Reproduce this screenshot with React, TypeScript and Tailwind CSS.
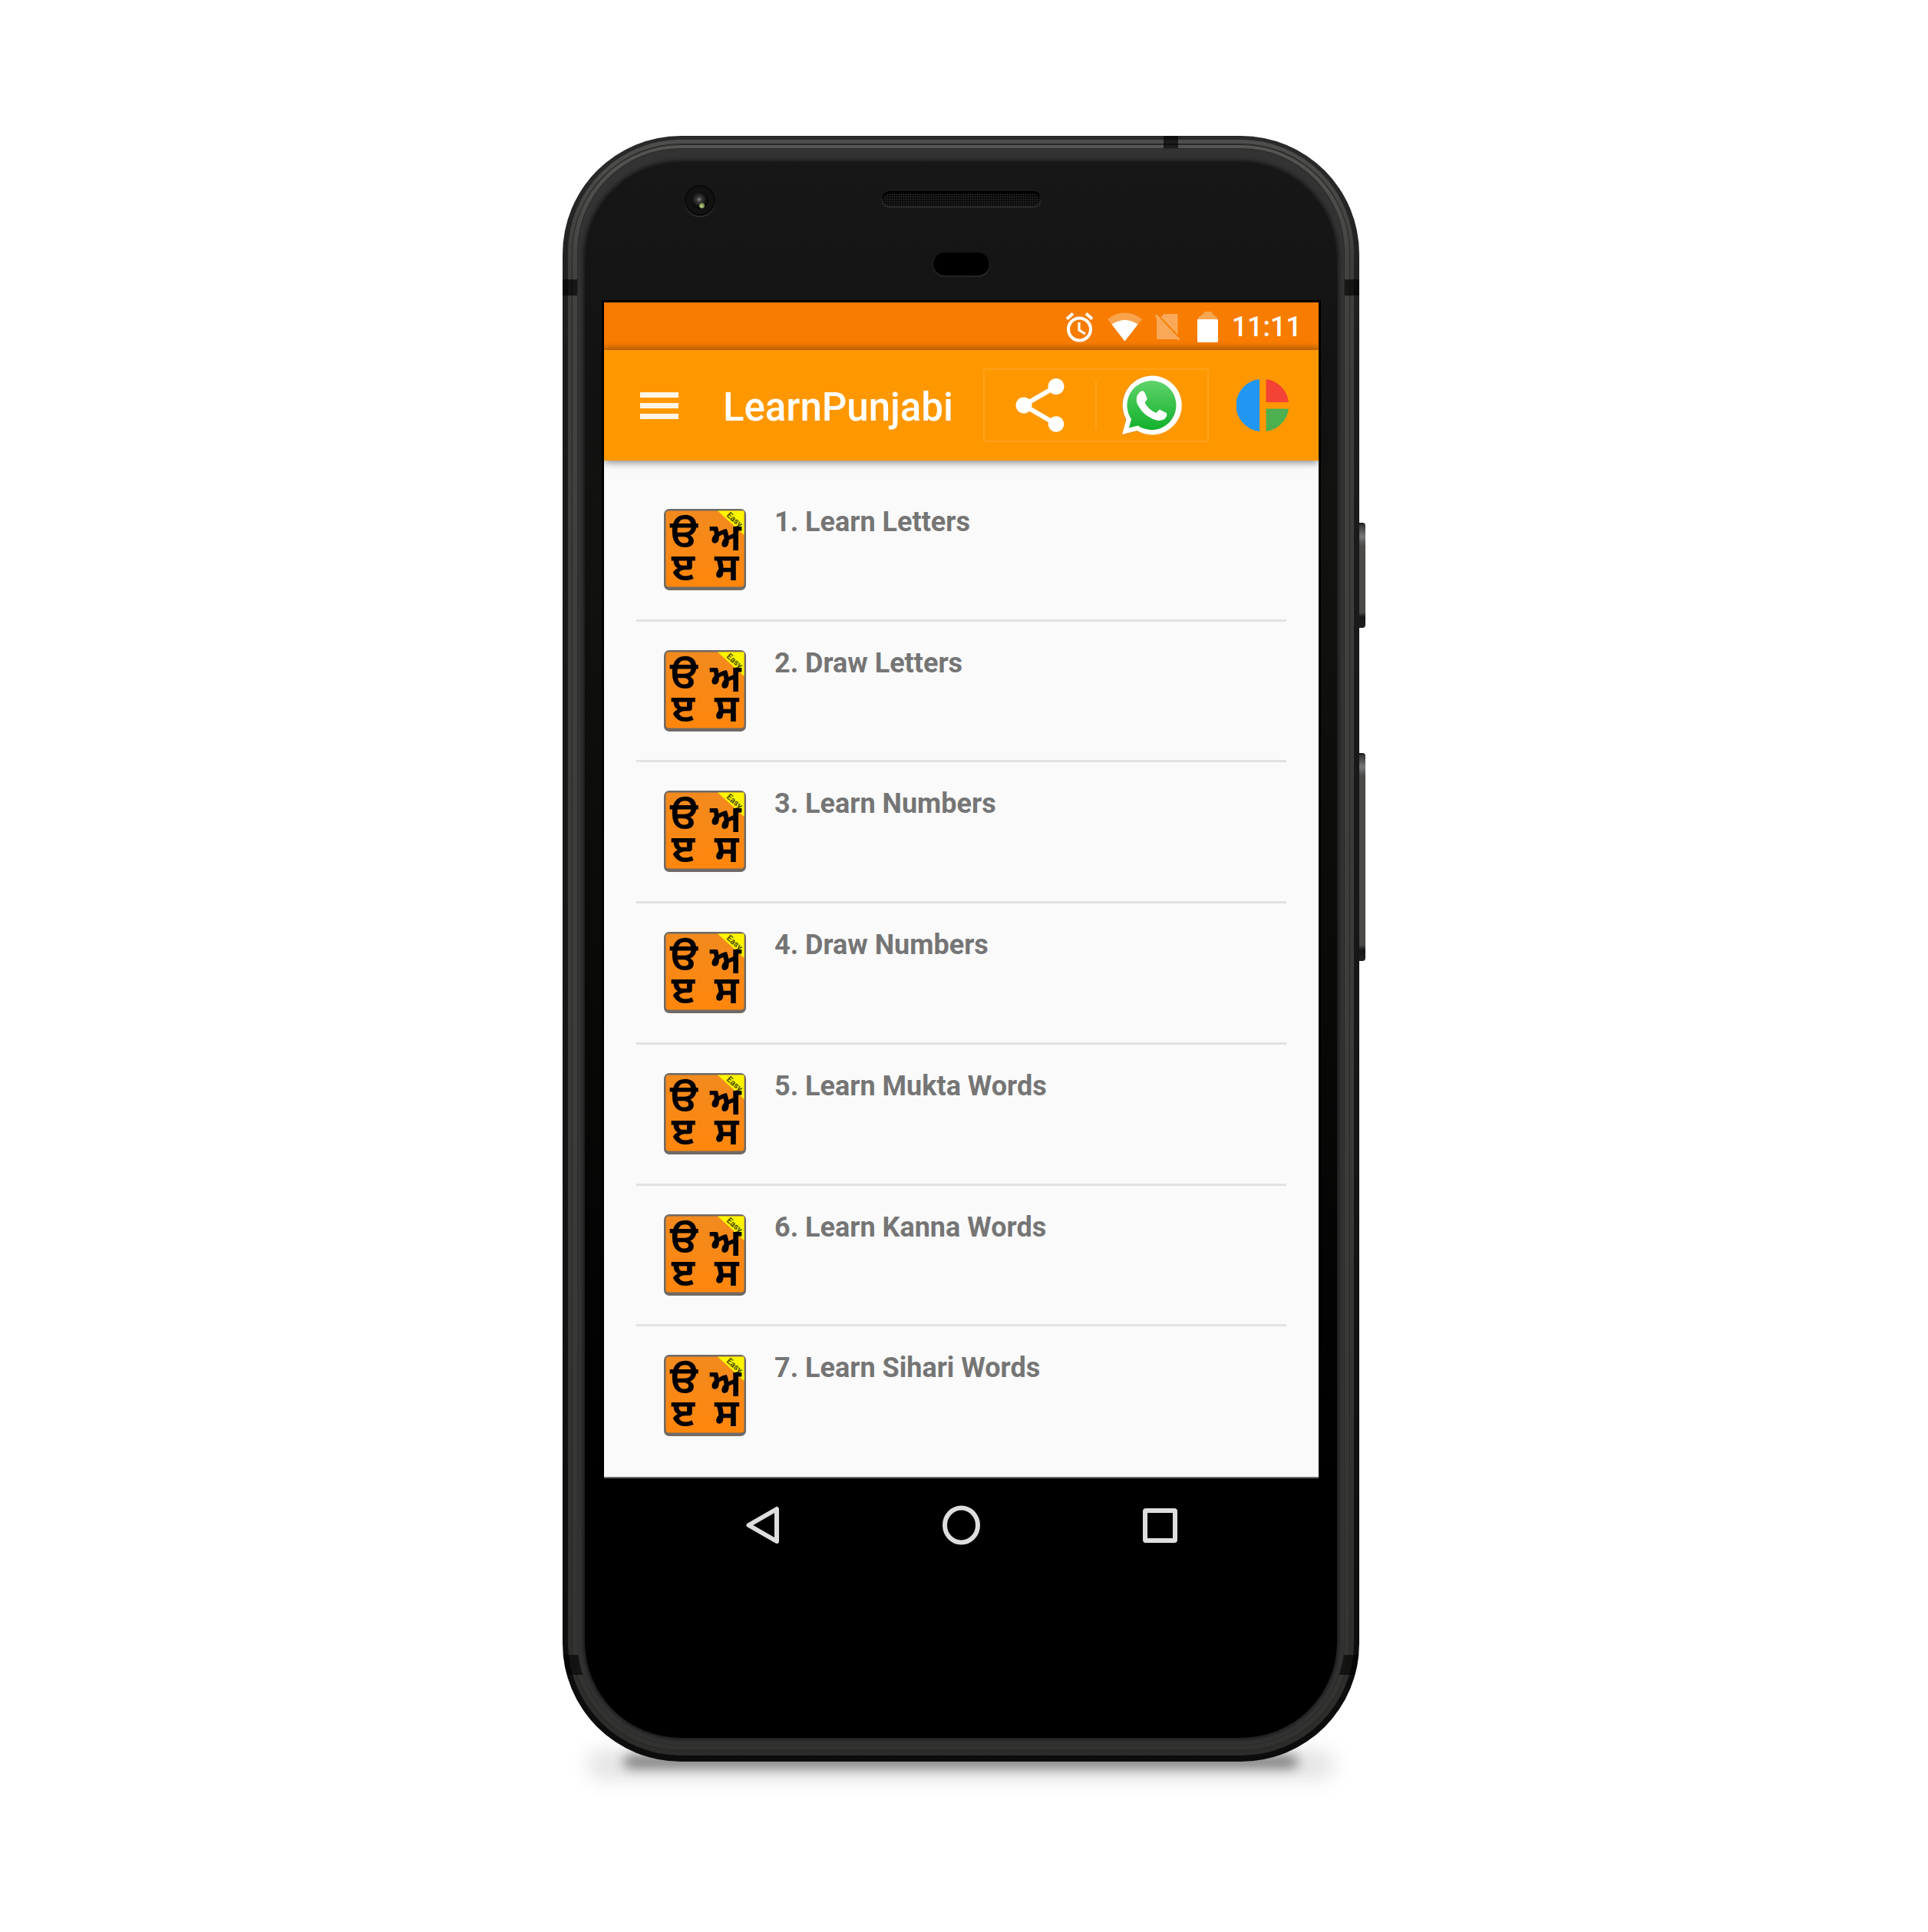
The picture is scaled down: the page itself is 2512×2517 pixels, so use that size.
import React from "react";

const LESSONS = [
  "Learn Letters",
  "Draw Letters",
  "Learn Numbers",
  "Draw Numbers",
  "Learn Mukta Words",
  "Learn Kanna Words",
  "Learn Sihari Words",
];

function AlarmIcon() {
  return (
    <svg viewBox="0 0 37 40" className="h-10 w-[37px]" fill="none" stroke="white" aria-hidden="true">
      <circle cx="18.5" cy="23" r="14.5" strokeWidth="4" />
      <path d="M18 14v10l8 5" strokeWidth="3.2" />
      <path d="M2 9.500l8-7M35 9.500l-8-7" strokeWidth="4" />
    </svg>
  );
}

function WifiIcon() {
  return (
    <svg viewBox="0 0 45 38" className="h-[38px] w-[45px]" aria-hidden="true">
      <path d="M22.500 37.500L0 9C6 4 13.500.500 22.500.500S39 4 45 9z" fill="white" opacity=".3" />
      <path d="M22.500 37.500L5.500 15.500C10 12.500 16 10 22.500 10S35 12.500 39.500 15.500z" fill="white" />
    </svg>
  );
}

function NoSimIcon() {
  return (
    <svg viewBox="0 0 34 37" className="h-[37px] w-[34px]" fill="white" opacity=".34" aria-hidden="true">
      <path d="M8.500 5l4-4h18v27z" />
      <path d="M1 3.500L3 1.500 33.500 34l-2 2-2-2H3V7.500z" />
    </svg>
  );
}

function BatteryIcon() {
  return (
    <svg viewBox="0 0 27 40" className="h-10 w-[27px]" fill="white" aria-hidden="true">
      <path d="M1 10q0-4 4-5l4-4q1-1 3-1h4q2 0 3 1l3 4q4 1 4 5z" opacity=".32" />
      <path d="M0 10h27v28q0 2-2 2H2q-2 0-2-2z" />
    </svg>
  );
}

function ShareIcon() {
  return (
    <svg viewBox="0 0 24 24" className="size-21" fill="white" aria-hidden="true">
      <path d="M18 16.080c-.76 0-1.440.3-1.960.77L8.910 12.700c.05-.23.09-.46.09-.7s-.04-.47-.09-.7l7.050-4.110c.54.5 1.250.81 2.040.81 1.660 0 3-1.340 3-3s-1.340-3-3-3-3 1.340-3 3c0 .24.04.47.09.7L8.040 9.810C7.500 9.310 6.790 9 6 9c-1.660 0-3 1.340-3 3s1.340 3 3 3c.79 0 1.500-.31 2.040-.81l7.120 4.160c-.05.21-.08.43-.08.65 0 1.610 1.310 2.920 2.920 2.920s2.920-1.310 2.920-2.920-1.310-2.920-2.920-2.920z" />
    </svg>
  );
}

function WhatsAppIcon() {
  return (
    <svg viewBox="0 0 80 80" className="size-20" aria-hidden="true">
      <defs>
        <linearGradient id="wa" x1="0" y1="0" x2="0" y2="1">
          <stop offset="0" stopColor="#5fd36a" />
          <stop offset="1" stopColor="#12b02c" />
        </linearGradient>
      </defs>
      <path d="M0 79.500L5.500 59A38.500 38.500 0 1 1 21 74z" fill="#c98a2e" opacity=".5" />
      <path d="M1 78L6.500 58.500A38.500 38.500 0 1 1 20.500 73z" fill="white" />
      <path d="M10 69.500L13 58A32 32 0 1 1 21.500 66.500z" fill="url(#wa)" />
      <path
        transform="translate(19 20)"
        d="M7 1.500C9 .8 10.500 1.500 11.500 3.500L14.500 10.500C15 12 14 13.500 11.500 16.500C15 23 20 27.500 26.500 30C28.500 27.800 30 25.600 31.200 25.800L39 29.500C41 30.600 40.500 33.500 39 36C36.500 39.500 31 40.800 26 39.200C14.500 35.500 7 28.500 2 18.500C-1 11.500 1.500 4.500 7 1.500Z"
        fill="white"
      />
    </svg>
  );
}

function PieIcon() {
  return (
    <svg viewBox="0 0 68 68" className="size-17" aria-hidden="true">
      <path d="M30 0v68A34.200 34.200 0 0 1 30 0z" fill="#2196f3" />
      <path d="M38.500 0A34 34 0 0 1 68 30H38.500z" fill="#f44336" />
      <path d="M38.500 38.500H68A34 34 0 0 1 38.500 68z" fill="#4caf50" />
    </svg>
  );
}

function LessonIcon() {
  return (
    <svg viewBox="0 0 107 106" className="h-[106px] w-[107px] shrink-0 overflow-visible" aria-hidden="true">
      <defs>
        <linearGradient id="tile" x1="0" y1="0" x2="0" y2="1">
          <stop offset="0" stopColor="#f28a1e" />
          <stop offset="1" stopColor="#ff860c" />
        </linearGradient>
      </defs>
      <rect x="0" y="0" width="107" height="106" rx="7" fill="#6f6a66" />
      <rect x="2.500" y="2.500" width="102" height="99" rx="4" fill="url(#tile)" />
      <path d="M70 2.500H104.500V34z" fill="#fdf500" />
      <text transform="translate(81 9) rotate(42)" fontSize="11" fontWeight="700" fontFamily="Roboto, sans-serif" fill="#4a4a00">
        Easy
      </text>
      <g fontFamily='"Noto Sans Gurmukhi", "Noto Sans", FreeSans, sans-serif' fontWeight="700" fontSize="50" fill="#000">
        <text x="8" y="50">ੳ</text>
        <text x="60" y="54">ਅ</text>
        <text x="10" y="93">ੲ</text>
        <text x="66" y="93">ਸ</text>
      </g>
    </svg>
  );
}

function StatusBar() {
  return (
    <div className="flex h-[62px] items-center justify-end bg-[linear-gradient(to_bottom,#f77c00_52px,#d87000)] pt-0.5 pr-[22px]">
      <AlarmIcon />
      <span className="ml-[18px]"><WifiIcon /></span>
      <span className="ml-4"><NoSimIcon /></span>
      <span className="ml-[22px]"><BatteryIcon /></span>
      <span className="ml-[18px] text-[36px] leading-none font-medium text-white">11:11</span>
    </div>
  );
}

function Toolbar() {
  return (
    <header className="relative z-10 flex h-36 items-center bg-[#ff9800] pr-[39px] pl-[47px] shadow-[0_2px_10px_rgba(0,0,0,0.5)]">
      <button type="button" aria-label="Open menu" className="flex w-[50px] flex-col gap-[7px]">
        <span className="h-[7px] bg-white/90" />
        <span className="h-[7px] bg-white/90" />
        <span className="h-[7px] bg-white/90" />
      </button>
      <h1 className="ml-[58px] pt-1.5 text-[51px] leading-[60px] font-medium text-white">LearnPunjabi</h1>
      <div className="ml-auto flex h-24 w-[294px] items-center rounded-sm border-2 border-white/10">
        <button type="button" aria-label="Share" className="flex flex-1 justify-center">
          <ShareIcon />
        </button>
        <span className="h-16 w-[2px] bg-white/10" />
        <button type="button" aria-label="Share on WhatsApp" className="flex flex-1 justify-center">
          <WhatsAppIcon />
        </button>
      </div>
      <button type="button" aria-label="Statistics" className="ml-9">
        <PieIcon />
      </button>
    </header>
  );
}

function NavBar() {
  return (
    <nav className="flex h-[124px] justify-center border-t-2 border-[#6b6b6b] bg-black">
      <button type="button" aria-label="Back" className="flex w-[259px] items-center justify-center">
        <svg viewBox="0 0 45 52" className="h-[52px] w-[45px]" fill="none" stroke="#dedede" strokeWidth="6" strokeLinejoin="round" aria-hidden="true">
          <path d="M41 5v42L4.500 26z" />
        </svg>
      </button>
      <button type="button" aria-label="Home" className="flex w-[259px] items-center justify-center">
        <svg viewBox="0 0 49 52" className="h-[52px] w-[49px]" fill="none" stroke="#dedede" strokeWidth="6" aria-hidden="true">
          <ellipse cx="24.5" cy="26" rx="21.500" ry="22.500" />
        </svg>
      </button>
      <button type="button" aria-label="Recent apps" className="flex w-[259px] items-center justify-center">
        <span className="size-[45px] rounded-sm border-6 border-[#dedede]" />
      </button>
    </nav>
  );
}

function Screen() {
  return (
    <div className="mr-[21px] ml-[22px] border-[3px] border-black bg-[#fafafa] font-[Roboto,sans-serif]">
      <StatusBar />
      <Toolbar />
      <main className="px-[42px] pt-[26px] pb-3">
        <ul className="grid h-[1286px] grid-rows-7">
          {LESSONS.map((name, i) => (
            <li key={name} className={i < LESSONS.length - 1 ? "border-b-3 border-[#e2e2e2]" : ""}>
              <a href={"#lesson-" + (i + 1)} className="flex h-full items-start pt-[37px] pl-9">
                <LessonIcon />
                <span className="ml-[37px] text-[36px] leading-[34px] font-bold text-[#757575]">
                  {i + 1}. {name}
                </span>
              </a>
            </li>
          ))}
        </ul>
      </main>
      <NavBar />
    </div>
  );
}

function Earpiece() {
  return (
    <div className="grid h-[180px] grid-cols-[1fr_auto_1fr] items-start pt-[30px]">
      <div className="ml-[130px] flex size-10 items-center justify-center rounded-full border-2 border-[#0a0a0a] bg-[#121212] shadow-[0_2px_0_#2c2c2c]">
        <svg viewBox="0 0 24 24" className="size-6" aria-hidden="true">
          <defs>
            <radialGradient id="lens" cx=".45" cy=".45" r=".5">
              <stop offset="0" stopColor="#8a8a8a" />
              <stop offset=".3" stopColor="#3a3a3a" />
              <stop offset="1" stopColor="#050505" />
            </radialGradient>
          </defs>
          <circle cx="12" cy="12" r="11" fill="url(#lens)" />
          <circle cx="14.500" cy="19" r="3.500" fill="#7f9150" />
          <circle cx="14" cy="19.500" r="1.500" fill="#c9d99a" />
        </svg>
      </div>
      <div className="flex flex-col items-center pt-2">
        <div className="h-[19px] w-[207px] rounded-full bg-[#080808] bg-[radial-gradient(#2e2e2e_25%,transparent_60%)] bg-[length:3px_3px] shadow-[0_2px_0_1px_#262626,inset_0_3px_2px_#000]" />
        <div className="mt-[61px] h-[30px] w-[73px] rounded-full bg-black shadow-[0_1px_0_1px_#262626]" />
      </div>
    </div>
  );
}

function SideButtons() {
  return (
    <div className="flex w-2 flex-col pt-[504px]">
      <div className="h-[137px] rounded-r-sm bg-[linear-gradient(to_bottom,#1a1a1a,#3a3a3a_4px,#777_18px,#4c4a48_30px,#4c4a48_117px,#161616_123px,#222)]" />
      <div className="mt-[163px] h-[271px] rounded-r-sm bg-[linear-gradient(to_bottom,#1a1a1a,#3a3a3a_4px,#777_18px,#4c4a48_30px,#4c4a48_250px,#161616_257px,#222)]" />
    </div>
  );
}

export default function App() {
  return (
    <div className="flex min-h-screen justify-center bg-white pt-[177px] pb-[222px]">
      <div className="relative isolate flex w-full max-w-[1046px] items-start">
        <div className="absolute right-10 -bottom-6 left-8 -z-10 h-10 rounded-full bg-black/10 blur-[12px]" />
        <div className="absolute right-22 -bottom-2 left-20 -z-10 h-4 rounded-full bg-black/50 blur-[8px]" />

        <div className="relative isolate flex-1 overflow-hidden rounded-[154px] bg-[linear-gradient(to_bottom,#2a2a2a,#1c1c1c_300px,#161616_60%,#0c0c0c)] px-[7px] pt-[5px] pb-2">
          <div className="absolute top-0 right-[236px] z-10 h-[18px] w-[19px] bg-black/65" />
          <div className="absolute top-[187px] left-0 z-10 h-[21px] w-6 bg-black/65" />
          <div className="absolute top-[187px] right-0 z-10 h-[21px] w-6 bg-black/65" />
          <div className="absolute bottom-[113px] left-0 z-10 h-[26px] w-12 bg-black/60" />
          <div className="absolute right-0 bottom-[113px] z-10 h-[26px] w-12 bg-black/60" />

          <div className="rounded-[147px] bg-[linear-gradient(to_bottom,#4e4e4c,#3e3e3c_160px,#3a3a38_60%,#2c2c2a)] px-[6px] pt-[6px] pb-[7px]">
            <div className="rounded-[141px] border-t border-[#2a2a28] bg-[linear-gradient(to_bottom,#555553,#424240_160px,#3c3c3a_60%,#323230)] px-[7px] pt-[5px] pb-[7px] ring-1 ring-[#262624]">
              <div className="relative z-20 rounded-[134px] bg-[#333] px-[9px] pt-[17px] pb-[9px] ring-1 ring-[#2a2a28]">
                <div className="rounded-[125px] bg-[linear-gradient(to_bottom,#171717,#131313_250px,#10100e_600px,#000_1700px)] pb-[213px] shadow-[0_0_5px_2px_#171717]">
                  <Earpiece />
                  <Screen />
                </div>
              </div>
            </div>
          </div>
        </div>

        <SideButtons />
      </div>
    </div>
  );
}
